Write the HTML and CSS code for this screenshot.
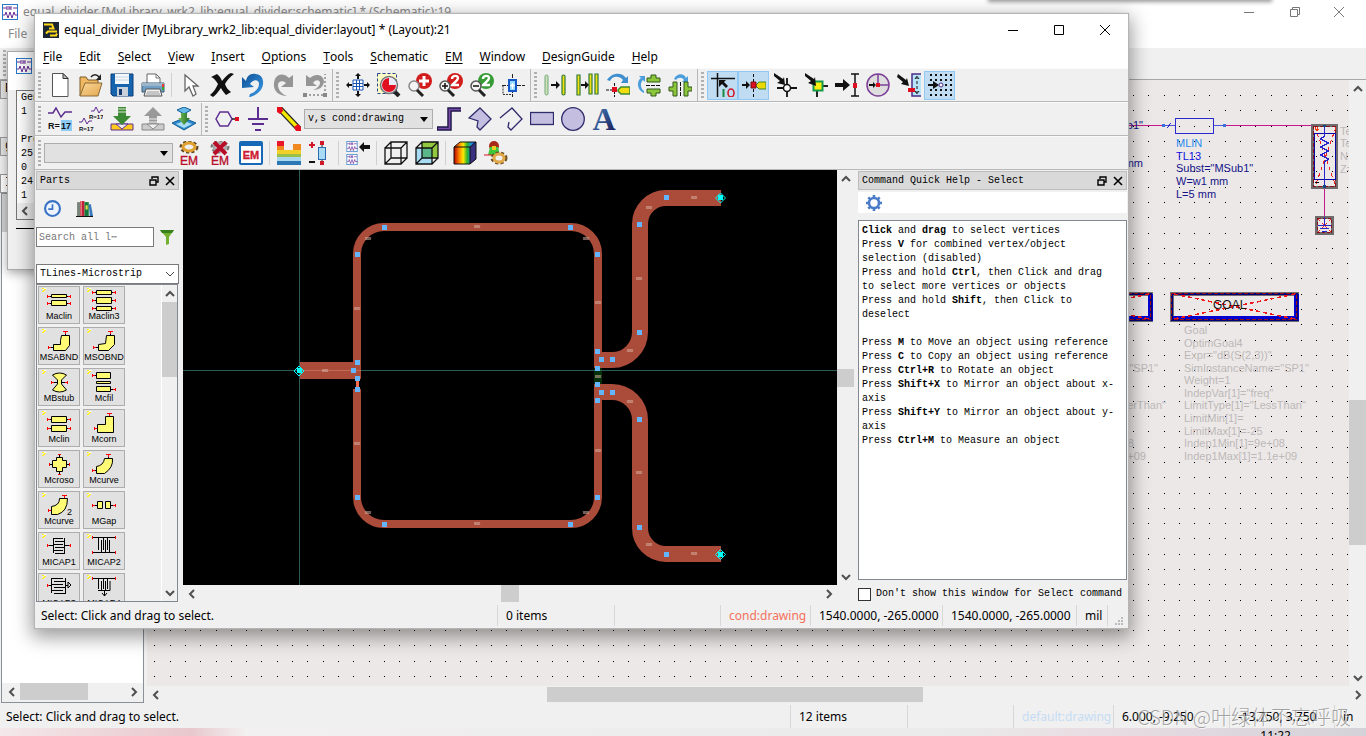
FILE: index.html
```html
<!DOCTYPE html>
<html lang="en">
<head>
<meta charset="utf-8">
<title>equal_divider (Layout)</title>
<link rel="stylesheet" href="styles.css">
</head>
<body>
<svg class="defs" width="0" height="0" aria-hidden="true">
  <defs>
    <linearGradient id="blueGrad" x1="0" y1="0" x2="1" y2="1"><stop offset="0" stop-color="#0d4f96"/><stop offset="1" stop-color="#3b9be6"/></linearGradient>
    <linearGradient id="letterGrad" x1="0" y1="0" x2="1" y2="1"><stop offset="0" stop-color="#4f93d0"/><stop offset="1" stop-color="#15104a"/></linearGradient>
    <linearGradient id="folderGrad" x1="0" y1="0" x2="1" y2="1"><stop offset="0" stop-color="#fbd89a"/><stop offset="1" stop-color="#e3a74e"/></linearGradient>
    <linearGradient id="rainbow" x1="0" x2="1"><stop offset="0" stop-color="#b00"/><stop offset=".25" stop-color="#ff8a00"/><stop offset=".42" stop-color="#ffe800"/><stop offset=".6" stop-color="#2db52d"/><stop offset=".8" stop-color="#1a8ce8"/><stop offset="1" stop-color="#2020c8"/></linearGradient>
    <linearGradient id="greenGrad" x1="0" x2="1"><stop offset="0" stop-color="#7fc25a"/><stop offset="1" stop-color="#1d6b22"/></linearGradient>
    <symbol id="sch" viewBox="0 0 16 16"><rect x=".5" y=".5" width="15" height="15" fill="#fff" stroke="#2a7ac8"/><path d="M1 4h4M11 4h4M5 2v4M7 2v4M9 2v4M7 4h2M1 11h2l1-3 2 6 2-6 2 6 2-6 1 3h3" fill="none" stroke="#6b2f96"/></symbol>
    <symbol id="restore" viewBox="0 0 10 10"><path d="M3 3V1h6v5H7M1 4h6v5H1z" fill="none" stroke="#000" stroke-width="1.4"/></symbol>
    <symbol id="close" viewBox="0 0 10 10"><path d="M1 1l8 8M9 1l-8 8" fill="none" stroke="#000" stroke-width="1.6"/></symbol>
    <symbol id="up" viewBox="0 0 10 10"><path d="M1 7l4-4 4 4" fill="none" stroke="#505050" stroke-width="2"/></symbol>
    <symbol id="down" viewBox="0 0 10 10"><path d="M1 3l4 4 4-4" fill="none" stroke="#505050" stroke-width="2"/></symbol>
    <symbol id="left" viewBox="0 0 10 10"><path d="M7 1L3 5l4 4" fill="none" stroke="#505050" stroke-width="2"/></symbol>
    <symbol id="right" viewBox="0 0 10 10"><path d="M3 1l4 4-4 4" fill="none" stroke="#505050" stroke-width="2"/></symbol>
    <symbol id="spark" viewBox="0 0 5 5"><path d="M1 0l4 0-4 5z" fill="#fff" opacity=".8"/><path d="M0 .5h2M2 1.500h2M1 2.500h2M0 3.500h2" stroke="#ffee20"/></symbol>
    <symbol id="cross" viewBox="0 0 7 4"><path d="M0 0l2 3M2 0L0 3M2 0l2 3M4 0L2 3M4 0l2 3M6 0L4 3" fill="none" stroke="#d8b3a5" stroke-width=".6"/></symbol>
  </defs>
</svg>

<main class="desktop">

<section class="window back" aria-label="Schematic window">
  <header class="back-title">
    <svg class="i16"><use href="#sch"/></svg>
    <span class="grow">equal_divider [MyLibrary_wrk2_lib:equal_divider:schematic] * (Schematic):19</span>
    <button class="win-btn" aria-label="Minimize"><svg class="i12" viewBox="0 0 12 12"><path d="M1 6.500h10" stroke="#777"/></svg></button>
    <button class="win-btn" aria-label="Restore"><svg class="i12" viewBox="0 0 12 12"><path d="M3.500 3V1.500h7v7H9M1.500 3.500h7v7h-7z" fill="none" stroke="#777"/></svg></button>
    <button class="win-btn" aria-label="Close"><svg class="i12" viewBox="0 0 12 12"><path d="M1 1l10 10M11 1L1 11" stroke="#777"/></svg></button>
  </header>
  <nav class="back-menu"><button>File</button></nav>
  <div class="back-tools"><i class="grip"></i></div>
  <div class="back-body">
    <aside class="back-side">
      <div class="back-box">E</div>
      <div class="back-box second">g</div>
      <div class="back-box third">I</div>
      <div class="back-list"><i class="back-item"></i></div>
      <div class="hscroll side-scroll"><button aria-label="Scroll left"><svg class="i10"><use href="#left"/></svg></button><i class="thumb side-thumb"></i><span class="grow"></span><button aria-label="Scroll right"><svg class="i10"><use href="#right"/></svg></button></div>
    </aside>
    <div class="back-view">
      <div class="back-row">
        <svg class="schematic" viewBox="147 80 1202 606" preserveAspectRatio="xMaxYMax slice">
          <g id="dots" fill="#000" shape-rendering="crispEdges"></g>
          <g fill="none" shape-rendering="crispEdges">
            <path d="M1100 125.500H1163M1225 125.500H1324" stroke="#c5188c"/>
            <path d="M1324.500 188V217" stroke="#c5188c"/>
            <rect x="1175.500" y="118.500" width="38" height="15" stroke="#2a2ad0"/>
            <path d="M1163 125.500h12M1214 125.500h11" stroke="#4a58d8"/>
            <path d="M1167 128l4-5" stroke="#2a2ad0"/>
            <path d="M1162 124h3v3h-3zM1223 124h3v3h-3z" fill="#3a70e0"/>
            <rect x="1312.500" y="125.500" width="24" height="62" stroke="#6f6a6c" stroke-width="3"/>
            <rect x="1313.500" y="126.500" width="22" height="60" stroke="#8a1018" stroke-dasharray="4 2"/>
            <path d="M1314.500 133v46h21v-46z" stroke="#0808a8"/>
            <path d="M1315 127l21 60M1336 127l-21 60" stroke="#e22" stroke-dasharray="4 3"/>
            <path d="M1324.500 125v11l-4 3 8 4-8 4 8 4-8 4 8 4-4 3v25" stroke="#2626cc" stroke-width="1.500"/>
            <path d="M1315 129.500h4M1317.500 127v4" stroke="#ff4000"/><path d="M1315 182.500h4" stroke="#000"/>
            <path d="M1323 125h3v2h-3zM1323 185h3v3h-3z" fill="#124a80"/>
            <rect x="1316.500" y="217.500" width="16" height="16" stroke="#6f6a6c" stroke-width="3"/>
            <rect x="1317.500" y="218.500" width="14" height="14" stroke="#8a1018" stroke-dasharray="3 2"/>
            <path d="M1324.500 217v8M1318 225.500h13M1320 228.500h9M1322 231.500h5" stroke="#2626cc"/>
            <path d="M1318 219l13 13M1331 219l-13 13" stroke="#e22" stroke-dasharray="3 2"/>
            <g id="goal">
              <path d="M1172 294h125v26h-125z" stroke="#716c6e" stroke-width="4"/>
              <path d="M1172 318h124v-24" stroke="#0000d0" stroke-width="5"/>
              <path d="M1171.500 293.500h125v26h-125z" stroke="#00007a" stroke-width="2"/>
              <path d="M1171.500 293.500h125v26h-125z" stroke="#96101c" stroke-dasharray="4 2"/>
              <path d="M1174 294l121 25M1295 294l-121 25" stroke="#f01818" stroke-width="1.500" stroke-dasharray="4 3"/>
            </g>
            <use href="#goal" x="-146"/>
          </g>
          <g class="sch-text">
            <text x="1213" y="309" class="goal-label">GOAL</text>
            <text x="1176" y="147" class="azure">MLIN</text>
            <text x="1176" y="160" class="blue">TL13</text>
            <text x="1176" y="172" class="navy">Subst="MSub1"</text>
            <text x="1176" y="185" class="navy">W=w1 mm</text>
            <text x="1176" y="198" class="navy">L=5 mm</text>
            <text x="1143" y="129" class="navy end">Sub1"</text>
            <text x="1143" y="167" class="navy end">mm</text>
            <text x="1340" y="135">Te</text><text x="1340" y="147">Te</text><text x="1340" y="160">N</text><text x="1340" y="173">Z=</text>
            <text x="1184" y="334">Goal</text>
            <text x="1184" y="347">OptimGoal4</text>
            <text x="1184" y="359">Expr="dB(S(2,3))"</text>
            <text x="1184" y="372">SimInstanceName="SP1"</text>
            <text x="1184" y="384">Weight=1</text>
            <text x="1184" y="397">IndepVar[1]="freq"</text>
            <text x="1184" y="409">LimitType[1]="LessThan"</text>
            <text x="1184" y="422">LimitMin[1]=</text>
            <text x="1184" y="435">LimitMax[1]=-25</text>
            <text x="1184" y="447">Indep1Min[1]=9e+08</text>
            <text x="1184" y="460">Indep1Max[1]=1.1e+09</text>
            <text x="1158" y="372" class="end">="SP1"</text>
            <text x="1166" y="409" class="end">terThan"</text>
            <text x="1134" y="447" class="end">08</text>
            <text x="1146" y="460" class="end">+09</text>
          </g>
        </svg>
        <div class="vscroll"><button aria-label="Scroll up"><svg class="i10"><use href="#up"/></svg></button><span class="space-a"></span><i class="thumb back-vthumb"></i><span class="grow"></span><button aria-label="Scroll down"><svg class="i10"><use href="#down"/></svg></button></div>
      </div>
      <div class="hscroll back-hscroll"><button aria-label="Scroll left"><svg class="i10"><use href="#left"/></svg></button><span class="space-b"></span><i class="thumb back-hthumb"></i><span class="grow"></span><button aria-label="Scroll right"><svg class="i10"><use href="#right"/></svg></button></div>
    </div>
  </div>
  <footer class="back-status">
    <span class="grow">Select: Click and drag to select.</span>
    <span class="cell b1">12 items</span><span class="cell b2"></span>
    <span class="cell b3">default:drawing</span><span class="cell b4">6.000, -9.250</span><span class="cell b5">-13.750, 3.750</span><span class="cell b6">in</span>
  </footer>
  <div class="taskbar"><span>11:22</span></div>
  <div class="watermark">CSDN @叶绿体不忘呼吸</div>
  <div class="edge-shade"></div>
</section>

<section class="window info" aria-label="Simulation log">
  <header class="info-title"><svg class="i16"><use href="#sch"/></svg></header>
  <pre class="info-text">Gener
1 .

Proce
25 :
0 :
24 :
1 :</pre>
  <div class="info-scroll"><svg class="i10"><use href="#left"/></svg></div>
  <hr>
</section>

<section class="window front" aria-label="Layout window">
  <header class="title">
    <svg class="i16" viewBox="0 0 16 16"><rect width="16" height="16" fill="#1b2630"/><path d="M1 2.500h8l1.500 4H6M3 11.500l2-2h9M7 13.500h6l1-2" fill="none" stroke="#ffd81a" stroke-width="2"/></svg>
    <h1 class="grow">equal_divider [MyLibrary_wrk2_lib:equal_divider:layout] * (Layout):21</h1>
    <button class="win-btn" aria-label="Minimize"><svg class="i12" viewBox="0 0 12 12"><path d="M1 6.500h10" stroke="#000"/></svg></button>
    <button class="win-btn" aria-label="Maximize"><svg class="i12" viewBox="0 0 12 12"><path d="M1.500 1.500h9v9h-9z" fill="none" stroke="#000"/></svg></button>
    <button class="win-btn" aria-label="Close"><svg class="i12" viewBox="0 0 12 12"><path d="M1 1l10 10M11 1L1 11" stroke="#000"/></svg></button>
  </header>
  <nav class="menu">
    <button><u>F</u>ile</button><button><u>E</u>dit</button><button><u>S</u>elect</button><button><u>V</u>iew</button><button><u>I</u>nsert</button><button><u>O</u>ptions</button><button><u>T</u>ools</button><button><u>S</u>chematic</button><button><u>E</u><u>M</u></button><button><u>W</u>indow</button><button><u>D</u>esignGuide</button><button><u>H</u>elp</button>
  </nav>

  <div class="toolrow">
    <div class="group"><i class="grip"></i>
      <button aria-label="New"><svg viewBox="0 0 24 24"><path d="M4.500.5H15l5 5v18H4.500z" fill="#fff" stroke="#555"/><path d="M15 .5v5h5z" fill="#bbb" stroke="#333"/></svg></button>
      <button aria-label="Open"><svg viewBox="0 0 24 24"><path d="M1 23V4h6l2 3h10v4" fill="#f0b860" stroke="#7a5a28"/><path d="M1 23L6 10h17l-4 13z" fill="url(#folderGrad)" stroke="#8a6a38"/><path d="M12 4c2-3 6-3 8 0" fill="none" stroke="#222" stroke-width="1.500"/><path d="M22 1v6h-5z" fill="#222"/></svg></button>
      <button aria-label="Save"><svg viewBox="0 0 24 24"><path d="M1 1h22v22H3l-2-2z" fill="#1764ae" stroke="#0c3c78"/><path d="M5 1h14v10H5z" fill="#f4f8fc"/><path d="M5 4h14M5 7h14" stroke="#c8d4e0"/><path d="M7 14h11v9H7z" fill="#c8d0da"/><path d="M9 16h3v6H9z" fill="#123a70"/></svg></button>
      <button aria-label="Print"><svg viewBox="0 0 24 24"><path d="M6 10V1h9l4 4v5" fill="#fff" stroke="#666"/><path d="M15 1v4h4" fill="none" stroke="#777"/><path d="M1 10h22v9H1z" fill="#6f9fc4" stroke="#3d5870"/><path d="M1 10h22v3H1z" fill="#9bb6ca"/><path d="M5 16h14l2 7H3z" fill="#f2f2f2" stroke="#555"/><path d="M6 19h12M5 21h14" stroke="#999"/><path d="M21 11h2v3h-2z" fill="#e33"/><path d="M21 14h2v3h-2z" fill="#3a3"/></svg></button>
      <i class="sep"></i>
      <button aria-label="Select"><svg viewBox="0 0 24 24"><path d="M6 2v16l4-4 4 9 3-2-3-8h5z" fill="#fff" stroke="#666" stroke-width="1.300"/></svg></button>
      <button aria-label="Delete"><svg viewBox="0 0 24 24"><path d="M1 4l6-3c3 2 4 5 5 7 3-4 6-7 9-8l3 1c-4 3-7 6-9 10 1 3 3 6 6 8l-5 3c-2-2-4-5-5-7-3 4-5 7-8 9l-3-2c4-3 6-7 8-11-2-3-4-6-7-7z" fill="#111"/></svg></button>
      <button aria-label="Undo"><svg viewBox="0 0 24 24"><path d="M1 4v11l12-1-4-3c3-5 9-5 9 0 0 4-3 8-9 10l-1 3c10-2 15-9 14-16C21 0 13-1 7 5l8-4C9 0 6 3 5 8z" fill="url(#blueGrad)"/></svg></button>
      <button aria-label="Redo"><svg viewBox="0 0 24 24"><path d="M21 2v12H9l5-4c-3-3-8-2-8 2 0 5 4 9 9 11-9 0-14-6-13-13C3 1 11-1 17 5z" fill="#959595"/></svg></button>
      <button aria-label="Undo to point"><svg viewBox="0 0 24 24"><path d="M3 2v11h11l-4-3c3-4 7-3 7 0s-4 6-7 7c7 0 11-4 11-9C20 1 12 0 7 5z" fill="#959595"/><path d="M2 22h20V1" fill="none" stroke="#888" stroke-width="1.500" stroke-dasharray="2 2"/><path d="M0 20h4v4H0zM20 20h4v4h-4z" fill="#888"/></svg></button>
    </div>
    <div class="group"><i class="grip"></i>
      <button aria-label="Fit view"><svg viewBox="0 0 24 24"><path d="M7 7h10v10H7zM10.500 7v10M13.500 7v10M7 10.500h10M7 13.500h10" fill="#fff" stroke="#1c56b4"/><path d="M12 0l3 3h-2v3h-2V3H9zM12 24l3-3h-2v-3h-2v3H9zM0 12l3-3v2h3v2H3v2zM24 12l-3-3v2h-3v2h3v2z" fill="#111"/></svg></button>
      <button aria-label="Zoom area"><svg viewBox="0 0 24 24"><rect x=".5" y=".5" width="19" height="20" fill="#fffbc4" stroke="#26468c" stroke-dasharray="3 2"/><path d="M17 18l5 5" stroke="#222" stroke-width="4"/><circle cx="12" cy="12" r="8.500" fill="#e8ecf6" stroke="#777" stroke-width="1.500"/><path d="M12 5a7 7 0 1 0 7 7h-7z" fill="#e01020"/></svg></button>
      <button aria-label="Zoom in"><svg viewBox="0 0 24 24"><circle cx="16" cy="8" r="8" fill="#d21c1c"/><path d="M16 3v10M11 8h10" stroke="#fff" stroke-width="3"/><circle cx="6" cy="13" r="5" fill="#f4f4f4" stroke="#888" stroke-width="1.500"/><path d="M9 17l6 6" stroke="#222" stroke-width="3"/></svg></button>
      <button aria-label="Zoom in by 2"><svg viewBox="0 0 24 24"><circle cx="16" cy="8" r="8" fill="#d21c1c"/><path d="M13 6c0-4 6-4 6-1 0 2-3 4-6 7h7" fill="none" stroke="#fff" stroke-width="2.400"/><circle cx="6" cy="13" r="5" fill="#f4f4f4" stroke="#555" stroke-width="1.500"/><path d="M6 10v6M3 13h6" stroke="#111" stroke-width="1.500"/><path d="M9 17l6 6" stroke="#222" stroke-width="3"/></svg></button>
      <button aria-label="Zoom out by 2"><svg viewBox="0 0 24 24"><circle cx="16" cy="8" r="8" fill="#369c35"/><path d="M13 6c0-4 6-4 6-1 0 2-3 4-6 7h7" fill="none" stroke="#fff" stroke-width="2.400"/><circle cx="6" cy="13" r="5" fill="#f4f4f4" stroke="#555" stroke-width="1.500"/><path d="M3 13h6" stroke="#111" stroke-width="1.500"/><path d="M9 17l6 6" stroke="#222" stroke-width="3"/></svg></button>
      <button aria-label="Pan"><svg viewBox="0 0 24 24"><path d="M2 12.500v9h9" fill="none" stroke="#333" stroke-dasharray="2 1"/><path d="M11.500 1v23M1 12.500h23" stroke="#222" stroke-dasharray="4 1"/><rect x="8" y="7" width="7" height="11" fill="#8fd8ff" stroke="#1658c8" stroke-width="2"/><path d="M11.500 10v6M9 12.500h5" stroke="#fff" stroke-width="1.500"/></svg></button>
    </div>
    <div class="group"><i class="grip"></i>
      <button aria-label="Move"><svg viewBox="0 0 24 24"><rect x="1" y="2" width="3" height="20" rx="1.500" fill="#cfe0b8" stroke="#6fa878"/><rect x="18" y="2" width="3" height="20" rx="1.500" fill="#f2e010" stroke="#2f7a38" stroke-width="1.200"/><path d="M7 11h5V8l4 4-4 4v-3H7z" fill="#111"/></svg></button>
      <button aria-label="Copy"><svg viewBox="0 0 24 24"><path d="M2 2h3v20H2zM14 1h3v20h-3zM20 1h3v20h-3z" fill="#f2e010" stroke="#2f7a38" stroke-width="1.200"/><path d="M6 11h4V8l4 4-4 4v-3H6z" fill="#111"/></svg></button>
      <button aria-label="Rotate"><svg viewBox="0 0 24 24"><path d="M1 7C6-1 16-1 20 5l2-2v7h-7l2-3C13 2 6 3 4 8z" fill="#3f8fd0"/><path d="M0 17h6M8.500 10v14" stroke="#111" stroke-dasharray="3 1"/><path d="M12 17l3-3h9v7h-9l-3-3z" fill="#f0dc10" stroke="#3c8a30" stroke-width="1.500"/><path d="M6 14h5v5H6z" fill="#e01020"/></svg></button>
      <button aria-label="Mirror about X"><svg viewBox="0 0 24 24"><path d="M7 20C-1 17 0 7 4 5L2 3h6v6L6 7c-3 3-3 8 1 11z" fill="#4b9edb"/><path d="M10 5h4V2h5v3h4v4H10zM10 16h13v4h-4v3h-5v-3h-4z" fill="#8cc63a" stroke="#33581c"/><path d="M9 12.500h15" stroke="#111" stroke-dasharray="4 1"/></svg></button>
      <button aria-label="Mirror about Y"><svg viewBox="0 0 24 24"><path d="M6 6c3-6 10-6 12-1l2-2v6h-6l2-2c-2-3-6-3-8 0z" fill="#4b9edb"/><path d="M5 9h4v14H5v-5H1v-4h4zM16 9h4v5h4v4h-4v5h-4z" fill="#8cc63a" stroke="#33581c"/><path d="M12.500 9v15" stroke="#111" stroke-dasharray="4 1"/></svg></button>
    </div>
    <div class="group last"><i class="grip"></i>
      <button class="on" aria-label="Input offset"><svg viewBox="0 0 24 24"><path d="M0 5.500h24M6.500 0v24" stroke="#111" stroke-width="1.500"/><path d="M8 7h7l-2 2 4 4-2 2-4-4-3 3z" fill="#111"/><path d="M12.500 16v8" stroke="#1a8a40" stroke-width="2"/><ellipse cx="20" cy="20" rx="3" ry="4" fill="none" stroke="#d01828" stroke-width="1.600"/></svg></button>
      <button class="on" aria-label="Pin snap"><svg viewBox="0 0 24 24"><path d="M11.500 1v23" stroke="#111" stroke-dasharray="3 2"/><path d="M0 11h4V8l4 4-4 4v-3H0z" fill="#111"/><path d="M14 12l3-3h7v7h-7l-3-3z" fill="#ecd800" stroke="#3c8a30"/><path d="M9 9h5v6H9z" fill="#e01020" stroke="#711"/></svg></button>
      <button aria-label="Vertex snap"><svg viewBox="0 0 24 24"><path d="M1 0l9 6 1-2 1 8-8-2 3-2-6-5z" fill="#111"/><path d="M14 5v19M4 15h20" stroke="#111" stroke-width="1.800"/><circle cx="14" cy="15" r="3.500" fill="#fff" stroke="#111" stroke-width="1.500"/></svg></button>
      <button aria-label="Midpoint snap"><svg viewBox="0 0 24 24"><path d="M13 15v9M14 13h10" stroke="#222" stroke-width="2"/><rect x="9.500" y="8.500" width="9" height="9" fill="#ffee10" stroke="#159a48" stroke-width="2"/><path d="M1 0l9 6 1-2 1 9-8-3 3-2-6-5z" fill="#111"/></svg></button>
      <button aria-label="Edge snap"><svg viewBox="0 0 24 24"><path d="M0 10h8V6l7 6-7 6v-4H0z" fill="#111"/><path d="M16 1h8M20 1v22M16 23h8" stroke="#111" stroke-width="1.500"/><path d="M18 10h4v5h-4z" fill="#e01020"/></svg></button>
      <button aria-label="Arc center snap"><svg viewBox="0 0 24 24"><circle cx="12" cy="12" r="11" fill="#dedede" stroke="#7d3f98" stroke-width="1.500"/><path d="M12 1v11h11" fill="none" stroke="#7d3f98" stroke-width="1.500"/><path d="M3 11h4V9l3 3-3 3v-2H3z" fill="#111"/><path d="M10 10h4v4h-4z" fill="#e01020"/></svg></button>
      <button aria-label="Intersection snap"><svg viewBox="0 0 24 24"><path d="M15 1h9v22h-9z" fill="#b8e4fa"/><path d="M24 1h-9v22h9" fill="none" stroke="#4b2a86" stroke-width="1.500"/><path d="M20 3v18M18 6l2-3 2 3M18 18l2 3 2-3" fill="none" stroke="#111" stroke-dasharray="3 2"/><path d="M1 1l8 6 1-2 2 8-8-2 2-2-6-5z" fill="#111"/><path d="M11 15h7v4h-7z" fill="#e01020"/></svg></button>
      <button class="on" aria-label="Grid snap"><svg viewBox="0 0 24 24"><path d="M2 2h22M2 7h22M2 17h22M2 22h22M17 12h7" stroke="#111" stroke-width="2" stroke-dasharray="2 3"/><path d="M0 11h5V8l6 4-6 4v-3H0z" fill="#111"/><circle cx="13" cy="12" r="2" fill="#fff" stroke="#4b2a86"/></svg></button>
    </div>
  </div>

  <div class="toolrow">
    <div class="group"><i class="grip"></i>
      <button aria-label="Edit component parameters"><svg viewBox="0 0 24 24"><path d="M0 6h5l3-5 5 9 4-5h7" fill="none" stroke="#5c2c90" stroke-width="1.500"/><rect x="13" y="13" width="11" height="11" fill="#8ccbf5"/><text x="0" y="22" class="icon-text">R=</text><text x="13" y="22" class="icon-text">17</text></svg></button>
      <button aria-label="Edit instance parameters"><svg viewBox="0 0 24 24"><path d="M0 15h3l2-4 3 6 2-3h3M12 4h3l2-4 3 6 2-3h2" fill="none" stroke="#5c2c90"/><text x="0" y="24" class="icon-small">R=17</text><text x="10" y="12" class="icon-small">R=17</text></svg></button>
      <button aria-label="Push into hierarchy"><svg viewBox="0 0 24 24"><path d="M1 17h22v6H1z" fill="#ffc91e" stroke="#5c2c90"/><path d="M6 17l6 5 6-5z" fill="#efefef" stroke="#5c2c90"/><path d="M8 0h8v9h5l-9 9-9-9h5z" fill="#3d8a35"/><path d="M8 2h8M8 5h8" stroke="#d8e8d0"/></svg></button>
      <button aria-label="Pop out of hierarchy"><svg viewBox="0 0 24 24"><path d="M1 17h22v6H1z" fill="#ccc" stroke="#888"/><path d="M6 17l6 5 6-5z" fill="#efefef" stroke="#888"/><path d="M8 17h8V9h5l-9-9-9 9h5z" fill="#999"/><path d="M8 12h8M8 15h8" stroke="#eee"/></svg></button>
      <button aria-label="View layer stack"><svg viewBox="0 0 24 24"><path d="M0 16l12-5 12 5-12 7z" fill="#2f8ccc" stroke="#115d9a"/><path d="M4 17l8-3 8 3-8 4z" fill="#a8dcf8"/><path d="M5 3l7-3 7 3-7 4z" fill="#66b8e6" stroke="#115d9a"/><path d="M9 6h6v5h3l-6 7-6-7h3z" fill="url(#greenGrad)"/></svg></button>
    </div>
    <div class="group last"><i class="grip"></i>
      <button aria-label="Insert pin"><svg viewBox="0 0 24 24"><path d="M1 12l4-7h8l4 7-4 7H5z" fill="none" stroke="#5c2c90" stroke-width="1.500"/><path d="M17 12h4" stroke="#222" stroke-width="1.500"/><path d="M20 10h4v4h-4z" fill="#e01020"/></svg></button>
      <button aria-label="Insert ground"><svg viewBox="0 0 24 24"><path d="M12 0v12M2 12h20M6 17h12M9 23h6" stroke="#5c2c90" stroke-width="2"/></svg></button>
      <button aria-label="Insert trace"><svg viewBox="0 0 24 24"><path d="M3 2l19 20" stroke="#222" stroke-width="6"/><path d="M3 2l19 20" stroke="#f4e800" stroke-width="3.500"/><path d="M0 0h5l1 4-3 3-3-2zM24 24h-5l-2-4 4-3 3 3z" fill="#e80c1c"/></svg></button>
      <span class="combo layer"><select aria-label="Entry layer"><option>v,s cond:drawing</option></select><svg viewBox="0 0 8 5"><path d="M0 0h8L4 5z" fill="#000"/></svg></span>
      <button aria-label="Insert path"><svg viewBox="0 0 24 24"><path d="M0 21.500h12.500V2.500H24" fill="none" stroke="#1d1848" stroke-width="4.500"/><path d="M1 21.500h11.500V2.500H24" fill="none" stroke="#7a4aaa" stroke-width="1.600"/></svg></button>
      <button aria-label="Insert polygon"><svg viewBox="0 0 24 24"><path d="M12 1l11 11-11 11-3-3 1-6-9-3z" fill="#c4bfe0" stroke="#302c6c" stroke-width="1.300"/></svg></button>
      <button aria-label="Insert polyline"><svg viewBox="0 0 24 24"><path d="M1 11L13 1l10 11-11 11-3-3 1-5" fill="none" stroke="#302c6c" stroke-width="1.300"/></svg></button>
      <button aria-label="Insert rectangle"><svg viewBox="0 0 24 24"><rect x=".5" y="5.500" width="23" height="12" fill="#c4bfe0" stroke="#302c6c" stroke-width="1.300"/></svg></button>
      <button aria-label="Insert circle"><svg viewBox="0 0 24 24"><circle cx="12" cy="12" r="11.300" fill="#c4bfe0" stroke="#302c6c" stroke-width="1.300"/></svg></button>
      <button aria-label="Insert text"><svg viewBox="0 0 24 24"><text x="12" y="23" class="icon-letter">A</text></svg></button>
    </div>
  </div>

  <div class="toolrow">
    <div class="group last"><i class="grip"></i>
      <span class="combo em"><select aria-label="EM setup"><option></option></select><svg viewBox="0 0 8 5"><path d="M0 0h8L4 5z" fill="#000"/></svg></span>
      <button aria-label="EM simulation settings"><svg viewBox="0 0 24 24"><ellipse cx="12" cy="6" rx="8" ry="5" fill="none" stroke="#5e4420" stroke-width="3" stroke-dasharray="3 2"/><ellipse cx="12" cy="6" rx="6" ry="4" fill="#efefef" stroke="#e0a030" stroke-width="3"/><text x="12" y="24" class="icon-em">EM</text></svg></button>
      <button aria-label="Clear EM"><svg viewBox="0 0 24 24"><ellipse cx="12" cy="6" rx="8" ry="5" fill="none" stroke="#777" stroke-width="3" stroke-dasharray="3 2"/><ellipse cx="12" cy="6" rx="6" ry="4" fill="#eee" stroke="#aaa" stroke-width="3"/><path d="M6 1l12 12M18 1L6 13" stroke="#b80c28" stroke-width="4"/><text x="12" y="24" class="icon-em">EM</text></svg></button>
      <button aria-label="EM simulate"><svg viewBox="0 0 24 24"><rect x="1" y="1" width="22" height="22" rx="1" fill="#fff" stroke="#1769b8" stroke-width="2"/><path d="M1 1h22v4H1z" fill="#1769b8"/><text x="12" y="18" class="icon-em box">EM</text></svg></button>
      <i class="sep"></i>
      <button aria-label="Substrate"><svg viewBox="0 0 24 24"><path d="M0 0h7v5H0z" fill="#e8182a"/><path d="M0 5h7v4h9V3h8v6H0z" fill="#f08a20"/><path d="M0 9h24v4H0z" fill="#f2d02a"/><path d="M0 13h24v3H0z" fill="#9ac04a"/><path d="M0 16h24v4H0z" fill="#a8d8f0"/><path d="M0 20h24v4H0z" fill="#2c78b4"/></svg></button>
      <button aria-label="Ports"><svg viewBox="0 0 24 24"><path d="M1 4h6M4 1v6" stroke="#d01828" stroke-width="2"/><path d="M1 21h6" stroke="#111" stroke-width="2"/><path d="M14 1v22" stroke="#222"/><rect x="10.500" y="6.500" width="7" height="12" fill="#a8dcf6" stroke="#2c6cae"/><path d="M12 0h4v4h-4zM12 20h4v4h-4z" fill="#d01828"/></svg></button>
      <i class="sep"></i>
      <button aria-label="Update layout"><svg viewBox="0 0 24 24"><use href="#sch" x="0" y="0" width="12" height="11"/><use href="#sch" x="0" y="13" width="12" height="11"/><path d="M24 4h-6V1l-5 5 5 5V8h6z" fill="#111"/></svg></button>
      <i class="sep"></i>
      <button aria-label="3D wireframe"><svg viewBox="0 0 24 24"><path d="M1 7h16v16H1zM7 1h16v16H7zM1 7l6-6M17 7l6-6M17 23l6-6M1 23l6-6" fill="none" stroke="#111" stroke-width="1.300"/></svg></button>
      <button aria-label="3D solid"><svg viewBox="0 0 24 24"><path d="M7 1h16v16H7z" fill="#92c83e"/><path d="M1 7h16v16H1z" fill="#a8dcf4"/><path d="M7 7h10v10H7z" fill="#5ab888"/><path d="M1 7h16v16H1zM7 1h16v16H7zM1 7l6-6M17 7l6-6M17 23l6-6M1 23l6-6" fill="none" stroke="#111" stroke-width="1.300"/></svg></button>
      <i class="sep"></i>
      <button aria-label="Far field"><svg viewBox="0 0 24 24"><path d="M1 6l6-5h16v17l-6 5H1z" fill="url(#rainbow)"/><path d="M17 6l6-5v17l-6 5z" fill="#3a3080"/><path d="M1 6h16v17H1zM1 6l6-5h16v17l-6 5M17 6l6-5" fill="none" stroke="#111"/></svg></button>
      <button aria-label="Field settings"><svg viewBox="0 0 24 24"><circle cx="10" cy="5" r="5" fill="#a82a18"/><path d="M6 6h8l2 8H4z" fill="#3cc83c"/><path d="M8 5h4v4H8z" fill="#e8d020"/><path d="M0 14h8" stroke="#e01020"/><ellipse cx="15" cy="17" rx="7" ry="5" fill="none" stroke="#6e5024" stroke-width="3" stroke-dasharray="3 2"/><ellipse cx="15" cy="17" rx="5" ry="4" fill="#efefef" stroke="#e0a848" stroke-width="3"/></svg></button>
    </div>
  </div>

  <div class="work">
    <aside class="parts">
      <header class="dock-title"><h2 class="grow">Parts</h2><button aria-label="Float"><svg class="i10"><use href="#restore"/></svg></button><button aria-label="Close"><svg class="i10"><use href="#close"/></svg></button></header>
      <div class="parts-tools">
        <button aria-label="History"><svg viewBox="0 0 16 16"><circle cx="8" cy="8" r="7" fill="#eef4ff" stroke="#3a72c4" stroke-width="2"/><path d="M8 4v4.500H4" fill="none" stroke="#3a72c4" stroke-width="1.600"/></svg></button>
        <button aria-label="Libraries"><svg viewBox="0 0 16 16"><path d="M1 2h3v13H1z" fill="#78857a"/><path d="M4 1h4v14H4z" fill="#c02038"/><path d="M5 1v14" stroke="#e88"/><path d="M8 2h4v13H8z" fill="#137a3c"/><path d="M9 5h2v4H9z" fill="#e4d848"/><path d="M12 4h2l2 11h-3z" fill="#3978bc"/><path d="M0 15.500h16" stroke="#111"/></svg></button>
      </div>
      <div class="search"><input type="text" aria-label="Search parts" placeholder="Search all l⋯"><button aria-label="Filter"><svg viewBox="0 0 14 16"><path d="M0 1h14L9 8v7l-3 1V8z" fill="#74b030"/><path d="M0 1h14l-2 3H2z" fill="#37801c"/></svg></button></div>
      <span class="combo palette"><select aria-label="Palette"><option>TLines-Microstrip</option></select><svg viewBox="0 0 10 6"><path d="M1 1l4 4 4-4" fill="none" stroke="#444"/></svg></span>
      <div class="list-frame">
        <div class="list">
          <button class="part"><svg viewBox="0 0 42 27"><use href="#spark" x="4" y="2" width="5" height="5"/><path d="M9 10.500h24M9 17.500h24" stroke="#000"/><path d="M13.500 8.500h15v3h-15zM13.500 14.500h15v5h-15z" class="strip"/><path d="M9.500 9v3M32.500 9v3M9.500 16v3M32.500 16v3M9 10.500h3M30 10.500h3M9 17.500h3M30 17.500h3" stroke="#f00"/></svg><span>Maclin</span></button>
          <button class="part"><svg viewBox="0 0 42 27"><use href="#spark" x="4" y="2" width="5" height="5"/><path d="M9 6.500h24M9 14.500h24M9 22.500h24" stroke="#000"/><path d="M13.500 4.500h15v4h-15zM13.500 11.500h15v6h-15zM13.500 20.500h15v4h-15z" class="strip"/><path d="M9.500 5v3M32.500 5v3M9.500 13v3M32.500 13v3M9.500 21v3M32.500 21v3M9 6.500h3M30 6.500h3M9 14.500h3M30 14.500h3M9 22.500h3M30 22.500h3" stroke="#f00"/></svg><span>Maclin3</span></button>
          <button class="part"><svg viewBox="0 0 42 27"><use href="#spark" x="4" y="2" width="5" height="5"/><path d="M11 20.500h5M27.500 5v4" stroke="#000"/><path d="M15.500 17.500h7v-4l1-5h8v10l-4 5h-12z" class="strip"/><path d="M10.500 19v3M10 20.500h3M25 4.500h5M27.500 4v3" stroke="#f00"/></svg><span>MSABND</span></button>
          <button class="part"><svg viewBox="0 0 42 27"><use href="#spark" x="4" y="2" width="5" height="5"/><path d="M11 20.500h5M27.500 5v4" stroke="#000"/><path d="M15.500 17.500l7-1 1-8h8v9l-6 6h-10z" class="strip"/><path d="M10.500 19v3M10 20.500h3M25 4.500h5M27.500 4v3" stroke="#f00"/></svg><span>MSOBND</span></button>
          <button class="part"><svg viewBox="0 0 42 27"><use href="#spark" x="4" y="2" width="5" height="5"/><path d="M13 14.500h17" stroke="#000"/><path d="M14.500 7q7-4 14 0l-5 5v4l5 6q-7 4-14 0l5-6v-4z" class="strip"/><path d="M13.500 13v3M29.500 13v3M13 14.500h3M27 14.500h3" stroke="#f00"/></svg><span>MBstub</span></button>
          <button class="part"><svg viewBox="0 0 42 27"><use href="#spark" x="4" y="2" width="5" height="5"/><path d="M9 7.500h4M28 21.500h5" stroke="#000"/><path d="M13.500 4.500h14v6h-14zM13.500 13.500h14v2h-14zM13.500 18.500h14v5h-14z" class="strip"/><path d="M9.500 6v3M9 7.500h3M32.500 20v3M30 21.500h3" stroke="#f00"/></svg><span>Mcfil</span></button>
          <button class="part"><svg viewBox="0 0 42 27"><use href="#spark" x="4" y="2" width="5" height="5"/><path d="M9 10.500h24M9 19.500h24" stroke="#000"/><path d="M13.500 7.500h15v6h-15zM13.500 16.500h15v6h-15z" class="strip"/><path d="M9.500 9v3M32.500 9v3M9.500 18v3M32.500 18v3M9 10.500h3M30 10.500h3M9 19.500h3M30 19.500h3" stroke="#f00"/></svg><span>Mclin</span></button>
          <button class="part"><svg viewBox="0 0 42 27"><use href="#spark" x="4" y="2" width="5" height="5"/><path d="M11 19.500h4M26.500 4v4" stroke="#000"/><path d="M14.500 15.500h8v-8h8v16h-16z" class="strip"/><path d="M11.500 18v3M11 19.500h3M24 4.500h5M26.500 4v3" stroke="#f00"/></svg><span>Mcorn</span></button>
          <button class="part"><svg viewBox="0 0 42 27"><use href="#spark" x="4" y="2" width="5" height="5"/><path d="M12 14.500h20M21.500 4v20" stroke="#000"/><path d="M18.500 7.500h6v3h4v7h-4v4h-6v-4h-4v-7h4z" class="strip"/><path d="M11.500 13v3M31.500 13v3M20 4.500h3M20 24.500h3" stroke="#f00"/></svg><span>Mcroso</span></button>
          <button class="part"><svg viewBox="0 0 42 27"><use href="#spark" x="4" y="2" width="5" height="5"/><path d="M9 20.500h5M25.500 5v4" stroke="#000"/><path d="M13.500 16.500q7-1 8-8h8q1 9-8 15h-8z" class="strip"/><path d="M9.500 19v3M9 20.500h3M23 4.500h5M25.500 4v3" stroke="#f00"/></svg><span>Mcurve</span></button>
          <button class="part"><svg viewBox="0 0 42 27"><use href="#spark" x="4" y="2" width="5" height="5"/><path d="M10 19.500h4M26.500 4v4" stroke="#000"/><path d="M13.500 15.500q8-1 8-8h8q0 13-10 16h-6z" class="strip"/><path d="M10.500 18v3M10 19.500h3M24 4.500h5M26.500 4v3" stroke="#f00"/><text x="29" y="24" class="part-num">2</text></svg><span>Mcurve</span></button>
          <button class="part"><svg viewBox="0 0 42 27"><use href="#spark" x="4" y="2" width="5" height="5"/><path d="M9 14.500h5M28 14.500h5" stroke="#000"/><path d="M14.500 10.500h5v7h-5zM22.500 10.500h5v7h-5z" class="strip"/><path d="M9.500 13v3M32.500 13v3M9 14.500h3M30 14.500h3" stroke="#f00"/></svg><span>MGap</span></button>
          <button class="part"><svg viewBox="0 0 42 27"><use href="#spark" x="4" y="2" width="5" height="5"/><path d="M9 13.500h6M27 13.500h6M15.500 6v15M26.500 6v15M15 6.500h10M17 9.500h10M15 12.500h10M17 15.500h10M15 18.500h10M17 21.500h10" fill="none" stroke="#000"/><path d="M9.500 12v3M32.500 12v3M9 13.500h2M31 13.500h2" stroke="#f00"/></svg><span>MICAP1</span></button>
          <button class="part"><svg viewBox="0 0 42 27"><use href="#spark" x="4" y="2" width="5" height="5"/><path d="M9 5.500h24M9 20.500h24M15.500 5v13M18.500 8v13M20.500 5v13M22.500 8v13M24.500 5v13M26.500 8v13" fill="none" stroke="#000"/><path d="M9.500 4v3M32.500 4v3M9.500 19v3M32.500 19v3" stroke="#f00"/></svg><span>MICAP2</span></button>
          <button class="part"><svg viewBox="0 0 42 27"><use href="#spark" x="4" y="2" width="5" height="5"/><path d="M9 12.500h5M27 12.500h3M13.500 5v15M27.500 5v15M13 5.500h12M16 8.500h12M13 11.500h12M16 14.500h12M13 17.500h12M16 20.500h12M30 9l3 3-3 3z" fill="none" stroke="#000"/><path d="M9.500 11v3M9 12.500h2" stroke="#f00"/></svg><span>MICAP3</span></button>
          <button class="part"><svg viewBox="0 0 42 27"><use href="#spark" x="4" y="2" width="5" height="5"/><path d="M9 5.500h24M15.500 5v11M18.500 8v9M20.500 5v11M22.500 8v9M24.500 5v11M15 17.500h12V8M21.500 18v5M19 20l2.500 3 2.500-3" fill="none" stroke="#000"/><path d="M9.500 4v3M32.500 4v3" stroke="#f00"/></svg><span>MICAP4</span></button>
        </div>
        <div class="vscroll"><button aria-label="Scroll up"><svg class="i10"><use href="#up"/></svg></button><i class="thumb list-thumb"></i><span class="grow"></span><button aria-label="Scroll down"><svg class="i10"><use href="#down"/></svg></button></div>
      </div>
    </aside>

    <div class="view">
      <div class="view-row">
        <svg class="layout" viewBox="183 170 654 415" preserveAspectRatio="xMidYMid slice">
          <g fill="none" stroke="#ab4c3b">
            <path d="M357 378V254A27 27 0 0 1 384 227H571A27 27 0 0 1 598 254V367M357 389V497A27 27 0 0 0 384 524H571A27 27 0 0 0 598 497V386" stroke-width="8"/>
            <path d="M299 370.500H361" stroke-width="17"/>
            <path d="M721 198H666A26 26 0 0 0 640 224V332A28 28 0 0 1 612 360H594M721 554H666A26 26 0 0 1 640 528V420A28 28 0 0 0 612 392H594" stroke-width="16"/>
          </g>
          <path d="M594 368h8v16h-8z" fill="#06300a"/>
          <path d="M356 379h3v10h-3z" fill="#f06a50"/>
          <path d="M299.500 170V585M183 370.500H837" stroke="#2d5c56" shape-rendering="crispEdges"/>
          <path d="M299 370.500H361" stroke="#c06a58"/>
          <g>
            <use href="#cross" x="474" y="225" width="7" height="4"/><use href="#cross" x="474" y="522" width="7" height="4"/>
            <use href="#cross" x="364" y="237" width="9" height="4"/><use href="#cross" x="582" y="237" width="9" height="4"/>
            <use href="#cross" x="364" y="511" width="9" height="4"/><use href="#cross" x="582" y="511" width="9" height="4"/>
            <use href="#cross" x="354" y="307" width="7" height="4"/><use href="#cross" x="354" y="442" width="7" height="4"/>
            <use href="#cross" x="595" y="301" width="7" height="4"/><use href="#cross" x="595" y="449" width="7" height="4"/>
            <use href="#cross" x="322" y="369" width="7" height="4"/><use href="#cross" x="595" y="375" width="7" height="4"/>
            <use href="#cross" x="645" y="206" width="9" height="4"/><use href="#cross" x="691" y="196" width="7" height="4"/>
            <use href="#cross" x="636" y="277" width="7" height="4"/><use href="#cross" x="626" y="349" width="9" height="4"/>
            <use href="#cross" x="626" y="400" width="9" height="4"/><use href="#cross" x="636" y="471" width="7" height="4"/>
            <use href="#cross" x="645" y="543" width="9" height="4"/><use href="#cross" x="691" y="552" width="7" height="4"/>
          </g>
          <path fill="#64b5ff" shape-rendering="crispEdges" d="M382 225h5v5h-5zM568 225h5v5h-5zM355 252h5v5h-5zM595 252h5v5h-5zM355 360h5v5h-5zM351 368h5v5h-5zM355 376h5v5h-5zM355 387h5v5h-5zM595 349h5v5h-5zM599 357h5v5h-5zM610 357h5v5h-5zM595 366h5v5h-5zM595 382h5v5h-5zM599 390h5v5h-5zM610 390h5v5h-5zM595 398h5v5h-5zM355 495h5v5h-5zM595 495h5v5h-5zM382 522h5v5h-5zM568 522h5v5h-5zM664 195h5v5h-5zM637 222h5v5h-5zM637 330h5v5h-5zM637 417h5v5h-5zM637 525h5v5h-5zM664 552h5v5h-5z"/>
          <g fill="none" stroke="#00ffff">
            <path d="M299 366l5 5-5 5-5-5zM720.500 193l5 5-5 5-5-5zM720.500 549.500l5 5-5 5-5-5z"/>
            <path d="M297 368h5v5h-5zM718 195h5v5h-5zM718 552h5v5h-5z" fill="#00ffff" stroke="none"/>
          </g>
        </svg>
        <div class="vscroll"><button aria-label="Scroll up"><svg class="i10"><use href="#up"/></svg></button><span class="grow"></span><i class="thumb mid-v"></i><span class="grow"></span><button aria-label="Scroll down"><svg class="i10"><use href="#down"/></svg></button></div>
      </div>
      <div class="hscroll"><button aria-label="Scroll left"><svg class="i10"><use href="#left"/></svg></button><span class="grow"></span><i class="thumb mid-h"></i><span class="grow"></span><button aria-label="Scroll right"><svg class="i10"><use href="#right"/></svg></button></div>
    </div>

    <aside class="help">
      <header class="dock-title"><h2 class="grow">Command Quick Help - Select</h2><button aria-label="Float"><svg class="i10"><use href="#restore"/></svg></button><button aria-label="Close"><svg class="i10"><use href="#close"/></svg></button></header>
      <div class="help-tools"><button aria-label="Help settings"><svg viewBox="0 0 16 16"><circle cx="8" cy="8" r="5" fill="none" stroke="#4a7cc8" stroke-width="2.600"/><path d="M8 0v3M8 13v3M0 8h3M13 8h3M2.300 2.300l2 2M11.700 11.700l2 2M13.700 2.300l-2 2M4.300 11.700l-2 2" stroke="#4a7cc8" stroke-width="2.600"/></svg></button></div>
      <div class="help-text"><p><b>Click</b> and <b>drag</b> to select vertices</p><p>Press <b>V</b> for combined vertex/object<br>selection (disabled)</p><p>Press and hold <b>Ctrl</b>, then Click and drag<br>to select more vertices or objects</p><p>Press and hold <b>Shift</b>, then Click to<br>deselect</p><br><p>Press <b>M</b> to Move an object using reference</p><p>Press <b>C</b> to Copy an object using reference</p><p>Press <b>Ctrl+R</b> to Rotate an object</p><p>Press <b>Shift+X</b> to Mirror an object about x-<br>axis</p><p>Press <b>Shift+Y</b> to Mirror an object about y-<br>axis</p><p>Press <b>Ctrl+M</b> to Measure an object</p></div>
      <label class="dont-show"><input type="checkbox"><span>Don't show this window for Select command</span></label>
    </aside>
  </div>

  <footer class="status">
    <span class="grow">Select: Click and drag to select.</span>
    <span class="cell c1">0 items</span><span class="cell c2"></span><span class="cell c3">cond:drawing</span><span class="cell c4">1540.0000, -265.0000</span><span class="cell c5">1540.0000, -265.0000</span><span class="cell c6">mil</span>
    <span class="cell c7"><svg viewBox="0 0 9 9"><path d="M6 0h2v2H6zM3 3h2v2H3zM6 3h2v2H6zM0 6h2v2H0zM3 6h2v2H3zM6 6h2v2H6z" fill="#bbb"/></svg></span>
  </footer>
</section>
</main>
<script src="grid.js"></script>
</body>
</html>
```
FILE: styles.css
```css
* { box-sizing: border-box; }
html, body { height: 100%; }
body { margin: 0; overflow: hidden; font: 12px/16px "Noto Sans", "Open Sans", sans-serif; color: #000; background: #efefef; }
button { margin: 0; padding: 0; border: 0; background: none; font: inherit; color: inherit; display: flex; align-items: center; justify-content: center; flex: none; }
h1, h2, p { margin: 0; font: inherit; }
svg { display: block; flex: none; }
svg.defs { position: absolute; }
.i10 { width: 10px; height: 10px; }
.i12 { width: 12px; height: 12px; }
.i16 { width: 16px; height: 16px; }
.grow { flex: 1; min-width: 0; white-space: nowrap; }
.desktop { position: relative; height: 100vh; overflow: hidden; }
.window { position: absolute; display: flex; flex-direction: column; }

/* scroll bars */
.vscroll { display: flex; flex-direction: column; flex: none; width: 17px; background: #f0f0f0; }
.vscroll button { height: 17px; }
.hscroll { display: flex; flex: none; height: 17px; background: #f0f0f0; }
.hscroll button { width: 17px; }
.thumb { flex: none; background: #cdcdcd; }

/* schematic window */
.back { inset: 0; background: #f0f0f0; }
.back-title { display: flex; align-items: center; height: 24px; padding-left: 2px; background: #fff; color: #8a8a8a; }
.back-title .grow { padding-left: 5px; }
.back-title .win-btn { width: 46px; height: 24px; }
.back-title .win-btn:last-child { width: 48px; padding-right: 6px; }
.back-menu { height: 24px; padding: 2px 8px; background: #fff; color: #8a8a8a; }
.back-tools { height: 32px; padding: 2px 3px; border-bottom: 1px solid #a8a8a8; }
.back-body { flex: 1; min-height: 0; display: flex; gap: 3px; }
.back-side { width: 144px; display: flex; flex-direction: column; font: 12px/16px "Liberation Mono", monospace; }
.back-box { height: 19px; border: 1px solid #999; padding-left: 4px; background: #e4e4e4; }
.back-box.second { margin-top: 38px; }
.back-box.third { margin-top: 18px; background: #fff; }
.back-list { flex: 1; background: #fff; border: 1px solid #8a8f98; border-width: 1px 1px 0; margin-left: 1px; }
.back-item { display: block; height: 38px; background: #d4d4d4; }
.side-scroll { height: 20px; margin-left: 1px; padding: 0 1px 2px; border: 1px solid #8a8f98; border-top: 0; }
.side-thumb { width: 68px; }
.back-view { flex: 1; min-width: 0; display: flex; flex-direction: column; }
.back-row { flex: 1; min-height: 0; display: flex; }
.schematic { flex: 1; min-width: 0; height: 100%; background: #ece8e7; }
.space-a { height: 303px; }
.space-b { width: 383px; }
.back-vthumb { height: 145px; }
.back-hthumb { width: 376px; height: 15px; margin-top: 1px; }
.back-hscroll { padding-right: 17px; }
.back-hscroll button:last-child { margin-right: -17px; }
.sch-text { font: 11px "Liberation Sans", sans-serif; fill: #bcb8b9; }
.end { text-anchor: end; }
.azure { fill: #1e8cf0; }
.blue { fill: #1010e0; }
.navy { fill: #14148a; }
.goal-label { font-size: 12px; fill: #111; }
.back-status { display: flex; height: 25px; padding: 2px 0 0 6px; line-height: 24px; }
.cell { flex: none; border-left: 1px solid #d8d8d8; padding-left: 8px; white-space: nowrap; }
.b1 { width: 117px; }
.b2 { width: 106px; }
.b3 { width: 100px; color: #c6dcf4; }
.b4 { width: 116px; }
.b5 { width: 105px; }
.b6 { width: 32px; }
.taskbar { height: 8px; overflow: hidden; background: linear-gradient(90deg, #f4e8ea 0, #e8c8cd 14%, #f2f0f0 18%, #eaeaea 70%, #e8dde2 80%, #d4d2d8 100%); line-height: 16px; text-align: right; padding-right: 75px; }
.watermark { position: absolute; right: 15px; bottom: 6px; font: 20px/26px "Noto Sans CJK SC", sans-serif; font-weight: 300; color: rgba(110, 110, 110, .6); text-shadow: 1px 1px 0 rgba(255, 255, 255, .7); }
.edge-shade { position: absolute; top: -4px; right: 96px; width: 280px; height: 4px; box-shadow: 0 0 4px 2px #999; }

/* log window */
.info { left: 7px; top: 51px; width: 300px; height: 219px; padding-left: 8px; background: #f0f0f0; border: 1px solid #aaa; box-shadow: 0 3px 10px rgba(0, 0, 0, .35); }
.info-title { height: 38px; margin-left: -8px; padding: 6px 0 0 8px; background: #fff; }
.info-text { margin: 0; padding: 0 4px; height: 113px; background: #fff; border: 1px solid #777; border-bottom: 0; font: 10px/14px "Liberation Mono", monospace; }
.info-scroll { height: 17px; padding: 3px; border: 1px solid #777; border-top: 0; }
.info hr { width: 100%; margin: 8px 0; border: 0; border-top: 1px solid #000; }

/* layout window */
.front { inset: 14px 238px 108px 35px; background: #f0f0f0; box-shadow: 0 0 1px 1px #b5b5b5, 0 6px 18px 3px rgba(0, 0, 0, .4); }
.title { display: flex; align-items: center; height: 31px; padding-left: 8px; background: #fff; }
.title h1 { padding-left: 5px; }
.title .win-btn { width: 46px; height: 31px; }
.menu { display: flex; gap: 17px; height: 23px; padding-left: 8px; background: #fff; }
u { text-underline-offset: 2px; }
.toolrow { display: flex; height: 34px; border-bottom: 1px solid #b8b8b8; border-top: 1px solid #fafafa; }
.group { display: flex; align-items: center; padding: 0 2px 0 3px; border-right: 1px solid #b8b8b8; }
.group.last { border-right: 0; }
.grip { display: block; flex: none; width: 3px; height: 27px; margin-right: 3px; background: repeating-linear-gradient(#b0b0b0 0 2px, transparent 2px 4px); }
.group button { width: 31px; height: 29px; }
.group button svg { width: 24px; height: 24px; }
.group button.on { background: #c0dcf3; border: 1px solid #90c8f6; }
.sep { flex: none; width: 1px; height: 24px; margin: 0 3px; background: #d0d0d0; }
.combo { display: inline-grid; align-items: center; font: 10px/14px "Liberation Mono", monospace; }
.combo select, .combo svg { grid-area: 1 / 1; }
.combo select { appearance: none; width: 100%; height: 20px; border: 1px solid #adadad; border-radius: 0; background: #e1e1e1; font: inherit; color: #000; padding: 0 3px; }
.combo svg { justify-self: end; width: 8px; height: 5px; margin-right: 5px; pointer-events: none; }
.combo.layer, .combo.em { width: 129px; }
.icon-text { font: bold 9px "Liberation Sans", sans-serif; fill: #111; }
.icon-small { font: bold 6px "Liberation Sans", sans-serif; fill: #111; }
.icon-letter { font: bold 32px "Liberation Serif", serif; text-anchor: middle; fill: url(#letterGrad); }
.icon-em { font: 12px "Liberation Sans", sans-serif; text-anchor: middle; fill: #b80c28; stroke: #b80c28; stroke-width: .3px; }
.icon-em.box { font-size: 11px; font-weight: bold; fill: #d82030; }

.work { flex: 1; min-height: 0; display: flex; }
.parts { flex: none; width: 145px; display: flex; flex-direction: column; padding: 0 1px; }
.dock-title { display: flex; align-items: center; height: 19px; margin-top: 1px; padding: 0 0 0 3px; background: #d9d9d9; border: 1px solid #bcbcbc; font: 10px/14px "Liberation Mono", monospace; }
.dock-title button { width: 16px; height: 16px; }
.parts-tools { display: flex; gap: 15px; height: 37px; padding: 0 8px; align-items: center; }
.parts-tools svg { width: 17px; height: 17px; }
.search { display: flex; gap: 6px; align-items: center; }
.search input { width: 118px; height: 20px; padding: 0 2px; border: 1px solid #7a7a7a; font: 10px/14px "Liberation Mono", monospace; }
.search input::placeholder { color: #777; }
.search svg { width: 14px; height: 16px; }
.combo.palette { margin-top: 17px; }
.combo.palette select { background: #fff; border-color: #7a7a7a; }
.combo.palette svg { width: 10px; height: 6px; margin-right: 4px; }
.list-frame { flex: 1; min-height: 0; display: flex; margin-right: 1px; border: 1px solid #828790; }
.list { flex: 1; min-width: 0; display: grid; grid-template-columns: repeat(auto-fill, 42px); grid-auto-rows: 38px; gap: 3px; padding: 1px; overflow: hidden; }
.part { display: flex; flex-direction: column; justify-content: flex-start; overflow: hidden; background: #e1e1e1; border: 1px solid #adadad; font: 9px/9px "Liberation Sans Narrow", "Liberation Sans", sans-serif; }
.part svg { width: 42px; height: 27px; margin: -1px; }
.strip { fill: #fffb74; stroke: #000; }
.part-num { font: 9px "Liberation Sans", sans-serif; }
.list-frame .vscroll { width: 16px; border-left: 1px solid #fff; }
.list-thumb { height: 75px; }

.view { flex: 1; min-width: 0; display: flex; flex-direction: column; padding-left: 3px; }
.view-row { flex: 1; min-height: 0; display: flex; }
.layout { flex: 1; min-width: 0; height: 100%; background: #000; }
.mid-v { height: 18px; }
.mid-h { width: 18px; }
.view .hscroll { margin-right: 17px; }

.help { flex: none; width: 274px; display: flex; flex-direction: column; padding: 0 1px 0 4px; }
.help-tools { height: 21px; margin-top: 2px; padding: 0 8px; background: #fff; display: flex; }
.help-tools svg { width: 16px; height: 16px; }
.help-text { flex: 1; min-height: 0; margin-top: 7px; padding: 3px; background: #fff; border: 1px solid #828790; font: 10px/14px "Liberation Mono", monospace; white-space: nowrap; overflow: hidden; }
.dont-show { display: flex; align-items: center; gap: 5px; height: 22px; padding-top: 6px; font: 10px/14px "Liberation Mono", monospace; white-space: nowrap; }
.dont-show input { appearance: none; flex: none; width: 13px; height: 13px; margin: 0; background: #fff; border: 1px solid #333; }

.status { display: flex; height: 26px; padding: 3px 0 2px 6px; line-height: 21px; }
.c1 { width: 117px; }
.c2 { width: 106px; }
.c3 { width: 90px; color: #f4705c; }
.c4 { width: 132px; }
.c5 { width: 134px; }
.c6 { width: 31px; }
.c7 { width: 21px; padding: 12px 0 0 7px; }
.c7 svg { width: 9px; height: 9px; }
```
FILE: grid.js
```js
// Fills the schematic page with its snap grid.
const NS = "http://www.w3.org/2000/svg";
const pitch = 15.29;
let d = "";
for (let row = 0; row < 39; row++) {
  const y = Math.round(95 + row * pitch);
  for (let col = -64; col < 15; col++) {
    d += "M" + Math.round(1133 + col * pitch) + " " + y + "h1v1h-1z";
  }
}
const path = document.createElementNS(NS, "path");
path.setAttribute("d", d);
document.getElementById("dots").appendChild(path);
```
